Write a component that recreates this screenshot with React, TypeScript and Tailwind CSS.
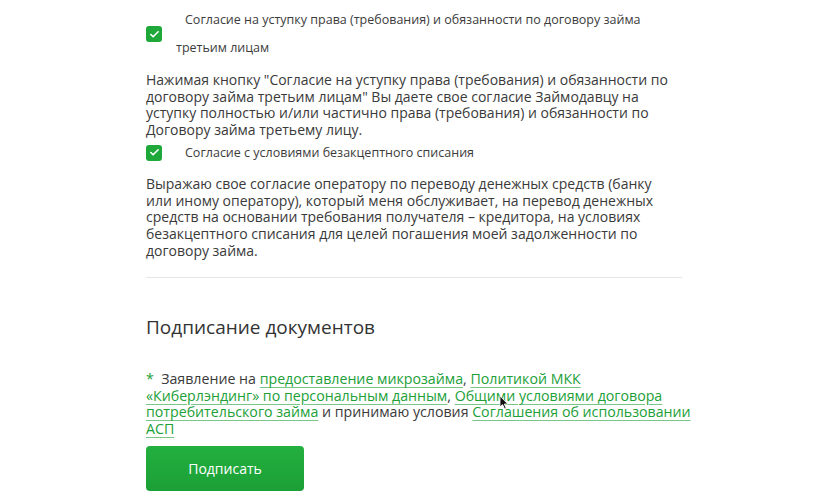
import { Check } from "lucide-react";

function Checkbox() {
  return (
    <span className="flex h-4 w-4 shrink-0 items-center justify-center rounded-[3px] bg-[#1fa83a]">
      <Check size={11} strokeWidth={3.5} className="text-white" />
    </span>
  );
}

function Consent({ children }: { children: React.ReactNode }) {
  return (
    <label className="flex items-center gap-[14px]">
      <Checkbox />
      <span className="indent-[9px] text-[12.5px] leading-[28px] text-[#3c3c3c]">
        {children}
      </span>
    </label>
  );
}

function Link({ children }: { children: React.ReactNode }) {
  return (
    <a className="cursor-pointer text-[#21a038] underline decoration-[#21a038]/60 underline-offset-[3px]">
      {children}
    </a>
  );
}

export default function App() {
  return (
    <div className="min-h-[500px] bg-white font-['Open_Sans',sans-serif] text-[#3a3a3a]">
      <div className="relative ml-[146px] w-[536px] pt-[6px]">
        <Consent>
          Согласие на уступку права (требования) и обязанности по договору займа третьим лицам
        </Consent>

        <p className="mt-[10px] pr-[6px] text-[14px] leading-[16.7px]">
          Нажимая кнопку "Согласие на уступку права (требования) и обязанности по договору
          займа третьим лицам" Вы даете свое согласие Займодавцу на уступку полностью и/или
          частично права (требования) и обязанности по Договору займа третьему лицу.
        </p>

        <Consent>Согласие с условиями безакцептного списания</Consent>

        <p className="mt-[9px] pr-[6px] text-[14px] leading-[16.7px]">
          Выражаю свое согласие оператору по переводу денежных средств (банку или иному
          оператору), который меня обслуживает, на перевод денежных средств на основании
          требования получателя – кредитора, на условиях безакцептного списания для целей
          погашения моей задолженности по договору займа.
        </p>

        <div className="mt-[18px] h-px bg-[#e6e6e6]" />

        <h2 className="mt-[37px] text-[19px] leading-[24px] text-[#333]">Подписание документов</h2>

        <p className="mt-[32px] w-[550px] text-[14.2px] leading-[16.5px]">
          <span className="text-[#21a038]">*</span>&nbsp; Заявление на{" "}
          <Link>предоставление микрозайма</Link>, <Link>Политикой МКК «Киберлэндинг» по персональным данным</Link>,{" "}
          <Link>Общими условиями договора потребительского займа</Link> и принимаю условия{" "}
          <Link>Соглашения об использовании АСП</Link>
        </p>

        <button className="mt-[9px] flex h-[45px] w-[158px] items-center justify-center rounded-[4px] bg-gradient-to-b from-[#23b03f] to-[#1c9f36] text-[14px] text-white">
          Подписать
        </button>

        {/* mouse pointer */}
        <svg
          className="absolute left-[353px] top-[395px]"
          width="10"
          height="15"
          viewBox="0 0 10 15"
        >
          <path d="M1 1 L1 12 L3.6 9.6 L5.6 14 L7.2 13.3 L5.3 9 L8.8 9 Z" fill="#111" stroke="#fff" strokeWidth="0.8" />
        </svg>
      </div>
    </div>
  );
}
